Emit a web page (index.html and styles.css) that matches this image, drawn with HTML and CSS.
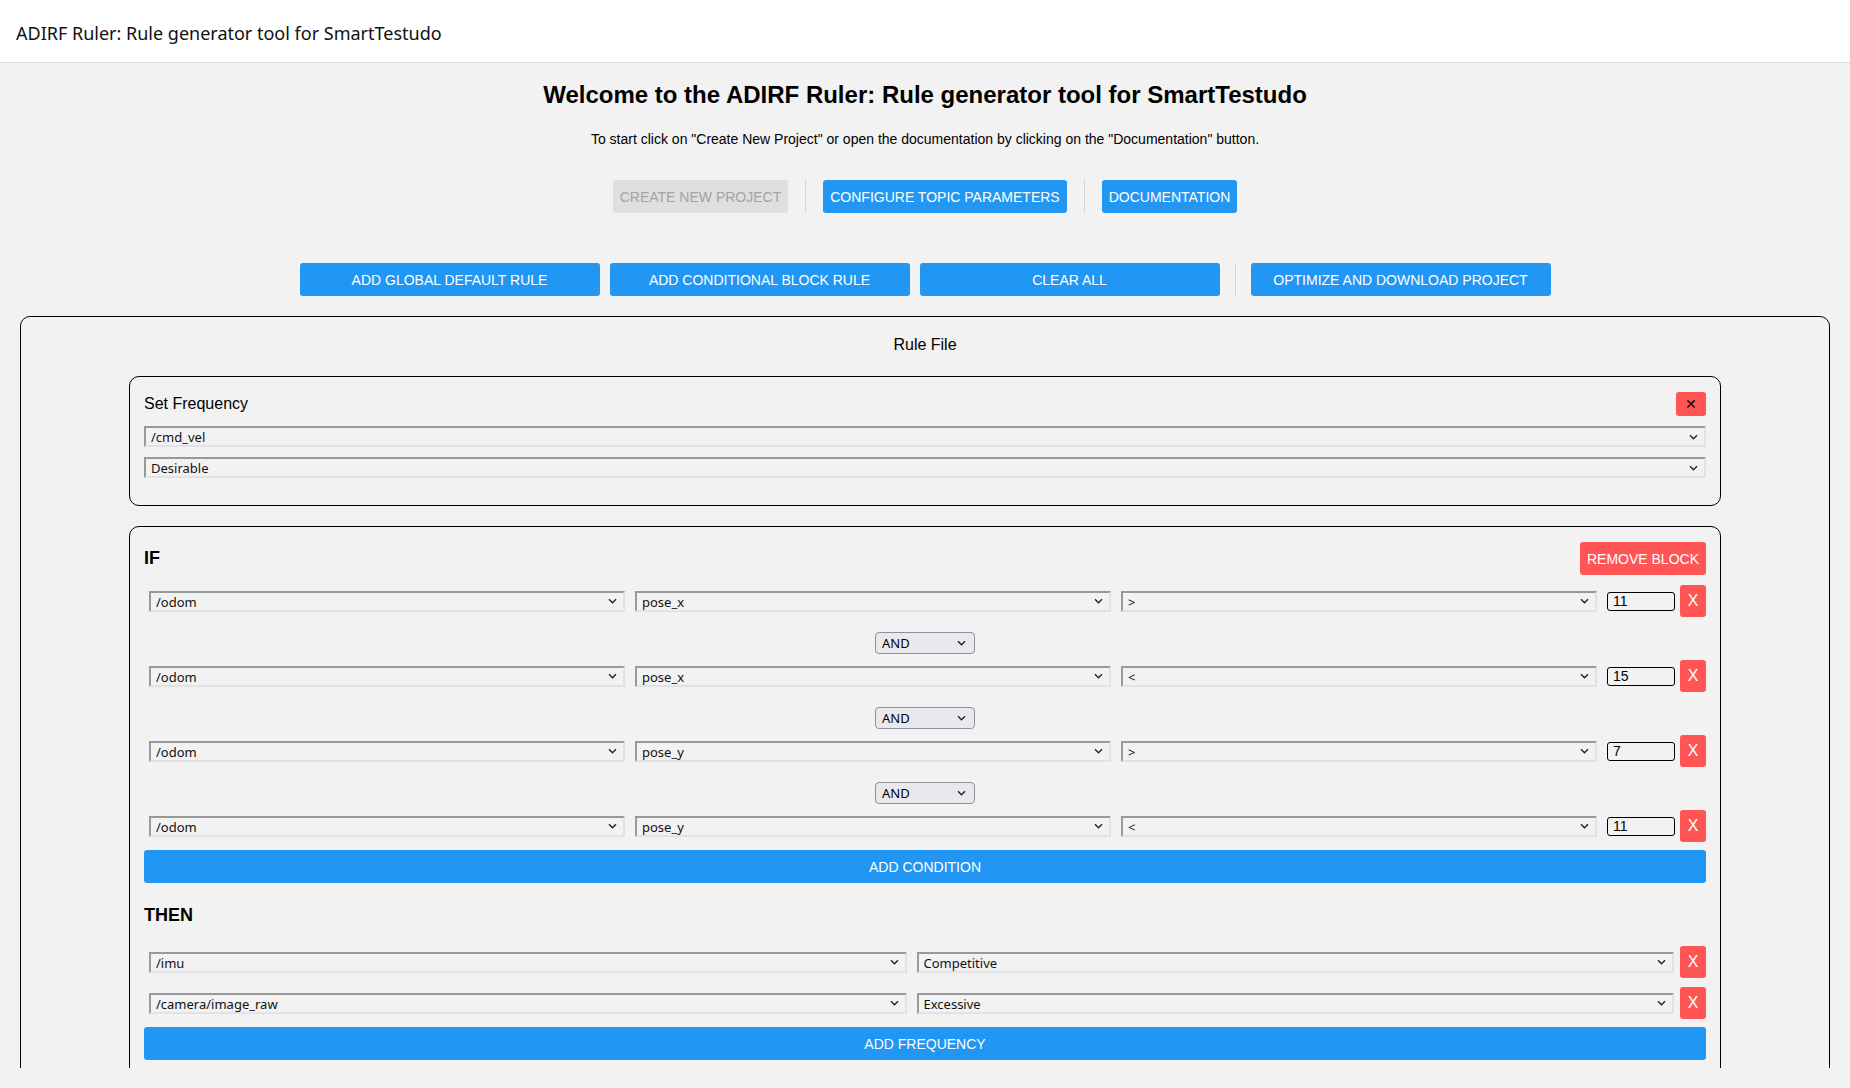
FILE: index.html
```html
<!DOCTYPE html>
<html lang="en">
<head>
<meta charset="utf-8">
<title>ADIRF Ruler</title>
<link rel="stylesheet" href="styles.css">
</head>
<body>
<header class="topbar">
  <span class="app-title">ADIRF Ruler: Rule generator tool for SmartTestudo</span>
</header>
<main class="main">
  <h1 class="welcome">Welcome to the ADIRF Ruler: Rule generator tool for SmartTestudo</h1>
  <p class="intro">To start click on "Create New Project" or open the documentation by clicking on the "Documentation" button.</p>

  <div class="btn-row top-actions">
    <button class="btn btn-disabled" disabled>Create New Project</button>
    <span class="sep"></span>
    <button class="btn">Configure Topic Parameters</button>
    <span class="sep"></span>
    <button class="btn">Documentation</button>
  </div>

  <div class="btn-row rule-actions">
    <button class="btn btn-wide">Add Global Default Rule</button>
    <button class="btn btn-wide">Add Conditional Block Rule</button>
    <button class="btn btn-wide">Clear All</button>
    <span class="sep sep-wide"></span>
    <button class="btn btn-wide">Optimize and Download Project</button>
  </div>

  <section class="rule-file">
    <div class="rule-file-title">Rule File</div>

    <div class="card">
      <div class="card-head">
        <span class="card-title">Set Frequency</span>
        <button class="close-btn">&#x2715;</button>
      </div>
      <select class="sel sel-full"><option>/cmd_vel</option></select>
      <select class="sel sel-full"><option>Desirable</option></select>
    </div>

    <div class="card block">
      <div class="card-head">
        <span class="block-label">IF</span>
        <button class="remove-btn">REMOVE BLOCK</button>
      </div>

      <div class="cond-row">
        <select class="sel sel-flex"><option>/odom</option></select>
        <select class="sel sel-flex"><option>pose_x</option></select>
        <select class="sel sel-flex"><option>&gt;</option></select>
        <input class="num" type="text" value="11">
        <button class="x-btn">X</button>
      </div>
      <div class="joiner"><select class="and-sel"><option>AND</option></select></div>
      <div class="cond-row">
        <select class="sel sel-flex"><option>/odom</option></select>
        <select class="sel sel-flex"><option>pose_x</option></select>
        <select class="sel sel-flex"><option>&lt;</option></select>
        <input class="num" type="text" value="15">
        <button class="x-btn">X</button>
      </div>
      <div class="joiner"><select class="and-sel"><option>AND</option></select></div>
      <div class="cond-row">
        <select class="sel sel-flex"><option>/odom</option></select>
        <select class="sel sel-flex"><option>pose_y</option></select>
        <select class="sel sel-flex"><option>&gt;</option></select>
        <input class="num" type="text" value="7">
        <button class="x-btn">X</button>
      </div>
      <div class="joiner"><select class="and-sel"><option>AND</option></select></div>
      <div class="cond-row">
        <select class="sel sel-flex"><option>/odom</option></select>
        <select class="sel sel-flex"><option>pose_y</option></select>
        <select class="sel sel-flex"><option>&lt;</option></select>
        <input class="num" type="text" value="11">
        <button class="x-btn">X</button>
      </div>
      <button class="btn btn-block add-cond">Add Condition</button>

      <div class="block-label then-label">THEN</div>
      <div class="then-row">
        <select class="sel sel-flex"><option>/imu</option></select>
        <select class="sel sel-flex"><option>Competitive</option></select>
        <button class="x-btn">X</button>
      </div>
      <div class="then-row">
        <select class="sel sel-flex"><option>/camera/image_raw</option></select>
        <select class="sel sel-flex"><option>Excessive</option></select>
        <button class="x-btn">X</button>
      </div>
      <button class="btn btn-block">Add Frequency</button>
    </div>
  </section>
</main>
</body>
</html>
```
FILE: styles.css
```css
* { box-sizing: border-box; }

html, body {
  margin: 0;
  padding: 0;
  background: #f2f2f2;
  font-family: "Liberation Sans", Arial, sans-serif;
  color: #000;
}

.topbar {
  height: 63px;
  background: #fff;
  border-bottom: 1px solid #dcdcdc;
  display: flex;
  align-items: center;
  padding-left: 16px;
}

.app-title {
  font-family: "Noto Sans", "Open Sans", sans-serif;
  font-size: 18px;
  color: #111;
  padding-top: 3px;
}

.main {
  display: block;
  height: 1005px;
  overflow: hidden;
}

.welcome {
  margin: 18px 0 0;
  font-size: 24px;
  line-height: 28px;
  font-weight: bold;
  text-align: center;
}

.intro {
  margin: 22px 0 0;
  font-size: 14px;
  line-height: 16px;
  text-align: center;
}

.btn-row {
  display: flex;
  justify-content: center;
  align-items: stretch;
}

.top-actions {
  margin-top: 33px;
  height: 33px;
}

.rule-actions {
  margin-top: 50px;
  height: 33px;
  gap: 10px;
}

.btn {
  font-family: "Liberation Sans", Arial, sans-serif;
  font-size: 14px;
  text-transform: uppercase;
  color: #fff;
  background: #2196f3;
  border: none;
  border-radius: 3px;
  padding: 0 7px;
  cursor: pointer;
}

.btn-disabled {
  background: #dfdfdf;
  color: #a3a3a3;
  cursor: default;
}

.btn-wide {
  width: 300px;
}

.sep {
  width: 1px;
  background: #d4d4d4;
  margin: 0 17px;
}

.sep-wide {
  margin: 0 5px;
}

.rule-file {
  margin: 20px 20px 0;
  border: 1px solid #000;
  border-radius: 10px;
  padding: 19px 108px 40px;
}

.rule-file-title {
  text-align: center;
  font-size: 16px;
  line-height: 18px;
  margin-bottom: 22px;
}

.card {
  border: 1px solid #000;
  border-radius: 10px;
  padding: 15px 14px 17px;
  margin-bottom: 20px;
}

.card-head {
  display: flex;
  justify-content: space-between;
  align-items: center;
  margin-bottom: 10px;
}

.card-title {
  font-size: 16px;
}

.close-btn {
  width: 30px;
  height: 24px;
  border: none;
  border-radius: 3px;
  background: #ff5555;
  color: #000;
  font-size: 14px;
  line-height: 24px;
  padding: 0;
}

.sel {
  -webkit-appearance: none;
  appearance: none;
  height: 21px;
  border: 2px solid;
  border-color: #999 #e2e2e2 #e2e2e2 #999;
  background-color: #f2f2f2;
  background-image: url("data:image/svg+xml,%3Csvg xmlns='http://www.w3.org/2000/svg' width='9' height='6' viewBox='0 0 9 6'%3E%3Cpath d='M1 1.2l3.5 3.5L8 1.2' fill='none' stroke='%23222' stroke-width='1.4'/%3E%3C/svg%3E");
  background-repeat: no-repeat;
  background-position: right 6px center;
  background-size: 9px 6px;
  font-family: "Noto Sans", sans-serif;
  font-size: 13px;
  color: #111;
  padding: 0 20px 0 5px;
  border-radius: 0;
}

.sel-full {
  display: block;
  width: 100%;
  margin-bottom: 10px;
}

.block-label {
  font-size: 18px;
  font-weight: bold;
}

.remove-btn {
  height: 33px;
  border: none;
  border-radius: 3px;
  background: #ff5555;
  color: #fff;
  font-family: "Liberation Sans", Arial, sans-serif;
  font-size: 14px;
  padding: 0 7px;
}

.cond-row, .then-row {
  display: flex;
  align-items: center;
  height: 32px;
}

.sel-flex {
  flex: 1;
  min-width: 0;
  margin: 0 5px;
}

.num {
  width: 68px;
  height: 19px;
  margin: 0 5px;
  border: 1px solid #000;
  border-radius: 3px;
  background: #f2f2f2;
  font-family: "Liberation Sans", Arial, sans-serif;
  font-size: 14px;
  padding: 0 5px;
}

.x-btn {
  width: 26px;
  height: 32px;
  border: none;
  border-radius: 3px;
  background: #ff5555;
  color: #fff;
  font-family: "Liberation Sans", Arial, sans-serif;
  font-size: 16px;
  padding: 0;
}

.then-row .x-btn { margin-left: 1px; }

.joiner {
  display: flex;
  justify-content: center;
  margin: 15px 0 6px;
}

.and-sel {
  -webkit-appearance: none;
  appearance: none;
  width: 100px;
  height: 22px;
  border: 1px solid #8f8f9d;
  border-radius: 4px;
  background-color: #e9e9ed;
  background-image: url("data:image/svg+xml,%3Csvg xmlns='http://www.w3.org/2000/svg' width='9' height='6' viewBox='0 0 9 6'%3E%3Cpath d='M1 1.2l3.5 3.5L8 1.2' fill='none' stroke='%23222' stroke-width='1.4'/%3E%3C/svg%3E");
  background-repeat: no-repeat;
  background-position: right 8px center;
  background-size: 9px 6px;
  font-family: "Noto Sans", sans-serif;
  font-size: 13px;
  color: #000;
  padding: 0 4px 0 6px;
}

.btn-block {
  display: block;
  width: 100%;
  height: 33px;
}

.add-cond {
  margin-top: 8px;
}

.then-label {
  margin: 21px 0 20px;
  line-height: 22px;
}

.then-row + .then-row {
  margin-top: 9px;
}

.then-row:last-of-type {
  margin-bottom: 8px;
}
```
